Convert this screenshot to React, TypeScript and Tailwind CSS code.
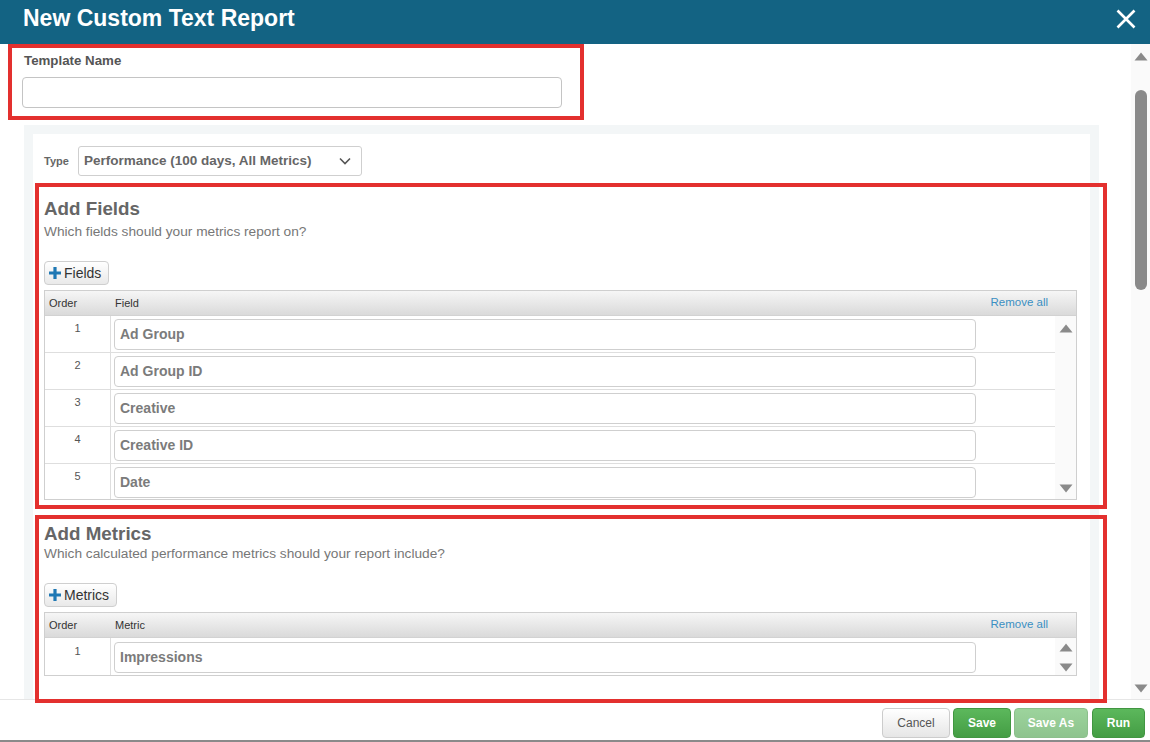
import React from 'react';

const FIELDS = ['Ad Group', 'Ad Group ID', 'Creative', 'Creative ID', 'Date'];

function UpArrow() {
  return (
    <svg width="14" height="9" viewBox="0 0 14 9">
      <path d="M7 0.5 L13.5 8.5 L0.5 8.5 Z" fill="#8a8a8a" />
    </svg>
  );
}

function DownArrow() {
  return (
    <svg width="14" height="9" viewBox="0 0 14 9">
      <path d="M0.5 0.5 L13.5 0.5 L7 8.5 Z" fill="#8a8a8a" />
    </svg>
  );
}

function Plus() {
  return (
    <svg width="12" height="12" viewBox="0 0 12 12">
      <path d="M4.4 0h3.2v4.4H12v3.2H7.6V12H4.4V7.6H0V4.4h4.4z" fill="#1f78b4" />
    </svg>
  );
}

function AddButton({ label }: { label: string }) {
  return (
    <button className="flex h-[24px] items-center gap-[3px] rounded-[4px] border border-[#cfcfcf] bg-gradient-to-b from-white to-[#e9e9e9] pl-[4px] pr-[7px] text-[14px] text-[#333]">
      <Plus />
      <span>{label}</span>
    </button>
  );
}

function TableHeader({ col }: { col: string }) {
  return (
    <div className="flex h-[25px] items-center border-b border-[#d2d2d2] bg-gradient-to-b from-[#f6f6f6] to-[#dadada] text-[11px] text-[#333]">
      <div className="w-[66px] pl-[4px]">Order</div>
      <div className="flex-1 pl-[4px]">{col}</div>
      <div className="pr-[28px] text-[11.5px] text-[#3a8fc2]">Remove all</div>
    </div>
  );
}

function FieldInput({ value }: { value: string }) {
  return (
    <div className="flex h-[31px] w-[862px] items-center rounded-[4px] border border-[#cfcfcf] bg-white pl-[5px] text-[14px] font-bold text-[#7b7b7b]">
      {value}
    </div>
  );
}

export default function App() {
  return (
    <div className="flex h-[742px] w-[1150px] flex-col overflow-hidden bg-white font-['Liberation_Sans',Arial,sans-serif]">
      {/* Header */}
      <div className="flex h-[44px] shrink-0 items-start justify-between bg-[#136383] pl-[23px] pr-[14px] pt-[5px]">
        <h1 className="text-[23px] font-bold leading-[26px] text-white">New Custom Text Report</h1>
        <svg width="20" height="20" viewBox="0 0 20 20" className="mt-[4px]">
          <path d="M1.5 1.5 L18.5 18.5 M18.5 1.5 L1.5 18.5" stroke="white" strokeWidth="2.6" />
        </svg>
      </div>

      {/* Body */}
      <div className="flex h-[659px] shrink-0 overflow-hidden">
        <div className="flex-1 overflow-hidden">
          {/* Template name */}
          <div className="ml-[8px] h-[76px] w-[576px] border-[4px] border-[#e3302e] pt-[5px]">
            <div className="pl-[12px] text-[13.3px] font-bold leading-[15px] text-[#555]">Template Name</div>
            <div className="ml-[10px] mt-[9px] h-[31px] w-[540px] rounded-[4px] border border-[#c4c4c4] bg-white" />
          </div>

          {/* Panel */}
          <div className="ml-[24px] mt-[5px] w-[1075px] bg-[#f3f6f7] p-[9px] pb-0">
            <div className="h-[800px] bg-white pt-[12px]">
              <div className="flex items-center pl-[11px]">
                <span className="w-[34px] text-[11px] font-bold text-[#666]">Type</span>
                <div className="flex h-[30px] w-[284px] items-center justify-between rounded-[3px] border border-[#cfcfcf] bg-white pl-[5px] pr-[10px] text-[13.5px] font-bold text-[#666]">
                  <span>Performance (100 days, All Metrics)</span>
                  <svg width="12" height="8" viewBox="0 0 12 8">
                    <path d="M1 1.5 L6 6.5 L11 1.5" stroke="#555" strokeWidth="1.6" fill="none" />
                  </svg>
                </div>
              </div>

              {/* Add Fields */}
              <div className="ml-[2px] mt-[7px] w-[1072px] shrink-0 border-[4px] border-[#e3302e] pb-[5px] pl-[5px] pt-[11px]">
                <h2 className="text-[18.8px] font-bold leading-[21px] text-[#666]">Add Fields</h2>
                <p className="mt-[5px] text-[13.7px] leading-[16px] text-[#777]">Which fields should your metrics report on?</p>
                <div className="mt-[21px] flex">
                  <AddButton label="Fields" />
                </div>
                <div className="mt-[5px] w-[1033px] border border-[#cfcfcf]">
                  <TableHeader col="Field" />
                  <div className="flex">
                    <div className="flex-1">
                      {FIELDS.map((f, i) => (
                        <div
                          key={f}
                          className={`flex ${i < FIELDS.length - 1 ? 'h-[37px] border-b border-[#dedede]' : 'h-[35px]'}`}
                        >
                          <div className="w-[66px] border-r border-[#dedede] pt-[5px] text-center text-[11px] leading-[14px] text-[#555]">
                            {i + 1}
                          </div>
                          <div className="pl-[3px] pt-[3px]">
                            <FieldInput value={f} />
                          </div>
                        </div>
                      ))}
                    </div>
                    <div className="flex w-[21px] flex-col items-center justify-between bg-[#fafafa] pb-[6px] pt-[8px]">
                      <UpArrow />
                      <DownArrow />
                    </div>
                  </div>
                </div>
              </div>

              {/* Add Metrics */}
              <div className="relative z-10 ml-[2px] mt-[6px] h-[188px] w-[1072px] shrink-0 border-[4px] border-[#e3302e] pl-[5px] pt-[4px]">
                <h2 className="text-[18.8px] font-bold leading-[21px] text-[#666]">Add Metrics</h2>
                <p className="mt-[2px] text-[13.7px] leading-[16px] text-[#777]">
                  Which calculated performance metrics should your report include?
                </p>
                <div className="mt-[21px] flex">
                  <AddButton label="Metrics" />
                </div>
                <div className="mt-[5px] w-[1033px] border border-[#cfcfcf]">
                  <TableHeader col="Metric" />
                  <div className="flex h-[37px]">
                    <div className="flex flex-1">
                      <div className="w-[66px] border-r border-[#dedede] pt-[6px] text-center text-[11px] leading-[14px] text-[#555]">
                        1
                      </div>
                      <div className="pl-[3px] pt-[4px]">
                        <FieldInput value="Impressions" />
                      </div>
                    </div>
                    <div className="flex w-[21px] flex-col items-center gap-[11px] bg-[#fafafa] pt-[5px]">
                      <UpArrow />
                      <DownArrow />
                    </div>
                  </div>
                </div>
              </div>
            </div>
          </div>
        </div>

        {/* Scrollbar */}
        <div className="flex w-[19px] shrink-0 flex-col items-center bg-[#fafafa] pb-[10px] pt-[8px]">
          <UpArrow />
          <div className="mt-[29px] h-[200px] w-[12px] rounded-full bg-[#8a8a8a]" />
          <div className="flex-1" />
          <DownArrow />
        </div>
      </div>

      {/* Footer */}
      <div className="-mt-[4px] flex h-[43px] shrink-0 items-start justify-end gap-[3px] border-b-2 border-t border-b-[#8a8a8a] border-t-[#e6e6e6] bg-white pr-[5px] pt-[8px]">
        <button className="h-[30px] w-[68px] rounded-[4px] border border-[#cccccc] bg-gradient-to-b from-white to-[#e6e6e6] text-[12px] text-[#555]">
          Cancel
        </button>
        <button className="h-[30px] w-[58px] rounded-[4px] border border-[#419641] bg-gradient-to-b from-[#5cb85c] to-[#449d44] text-[12px] font-bold text-white">
          Save
        </button>
        <button className="h-[30px] w-[74px] rounded-[4px] border border-[#419641] bg-gradient-to-b from-[#5cb85c] to-[#449d44] text-[12px] font-bold text-white opacity-60">
          Save As
        </button>
        <button className="ml-[1px] h-[30px] w-[53px] rounded-[4px] border border-[#419641] bg-gradient-to-b from-[#5cb85c] to-[#449d44] text-[12px] font-bold text-white">
          Run
        </button>
      </div>
    </div>
  );
}
